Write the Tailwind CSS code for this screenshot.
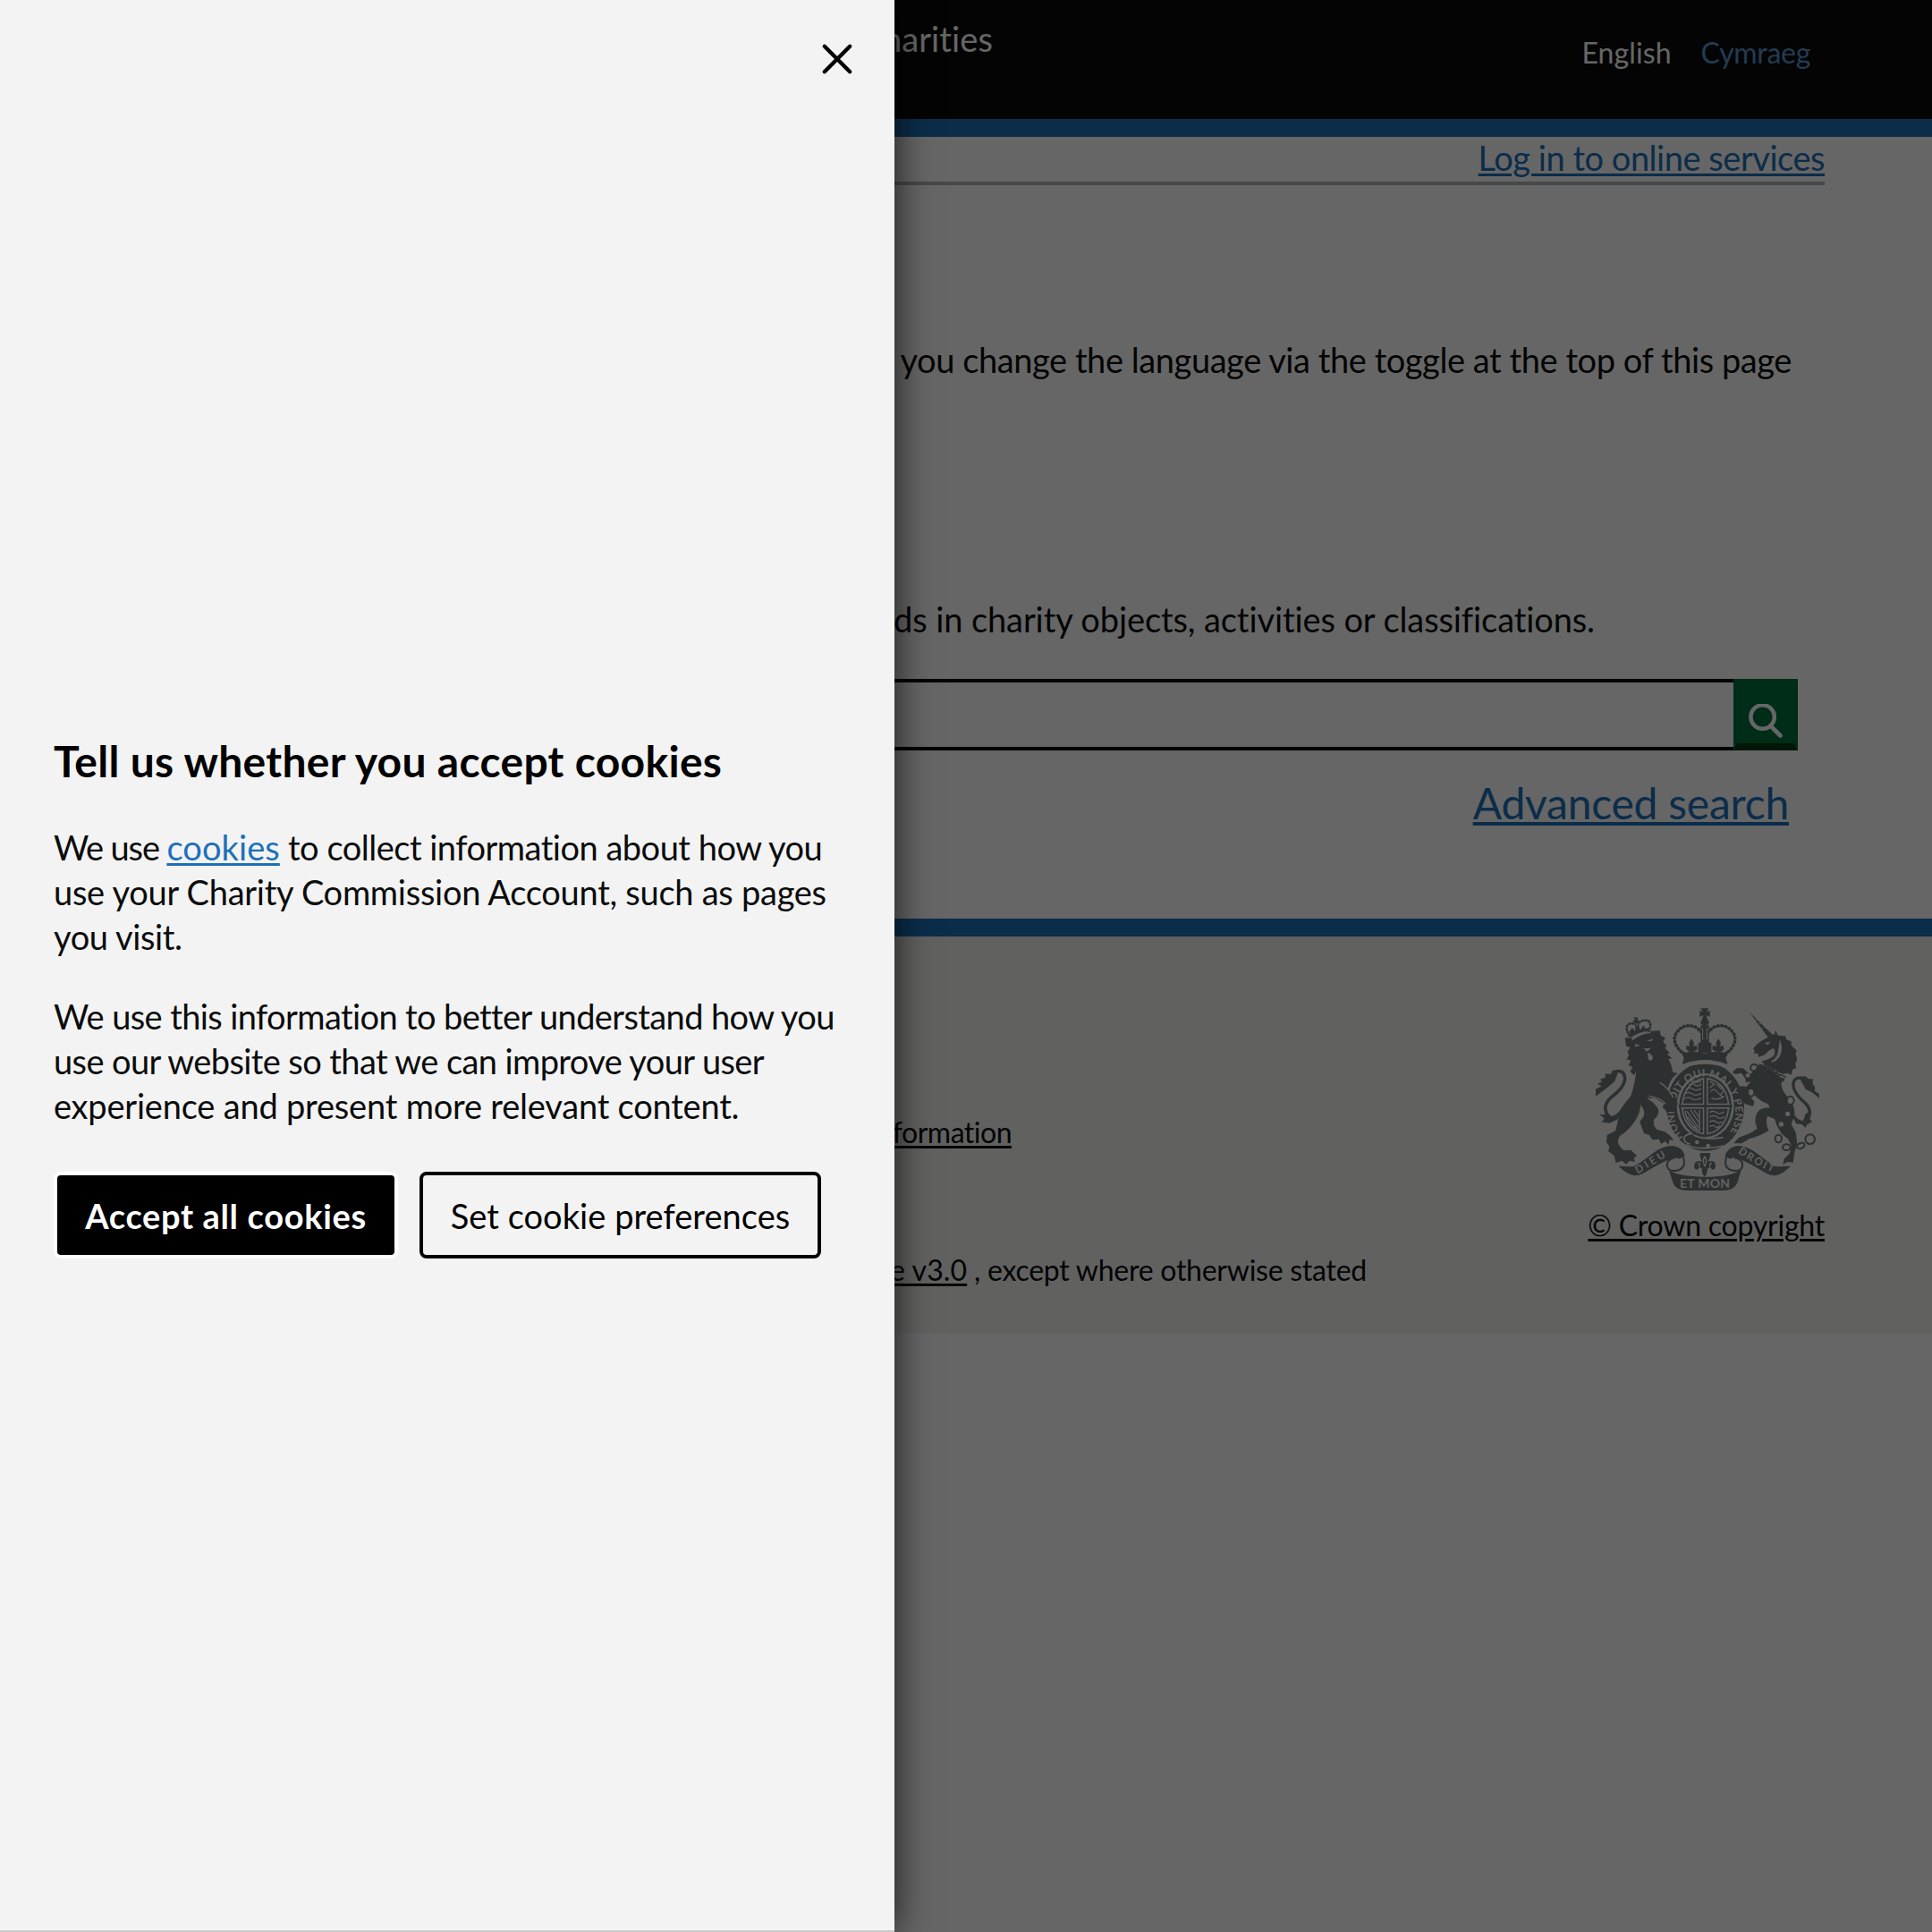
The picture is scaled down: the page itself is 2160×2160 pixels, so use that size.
<!DOCTYPE html>
<html lang="en">
<head>
<meta charset="utf-8">
<title>Register of charities</title>
<script src="https://cdn.jsdelivr.net/npm/@tailwindcss/browser@4"></script>
</head>
<body class="bg-white font-['Lato','Noto_Sans',sans-serif] text-[#0b0c0c]">
<div class="relative h-[2160px] w-[2160px] overflow-hidden">

  <!-- Page -->
  <header class="flex h-[153px] items-start justify-between border-b-[20px] border-[#1d70b8] bg-[#0b0c0c] pr-[136px] text-white">
    <div class="mt-[23px] w-[1110px] text-right text-[38px] leading-[40px] tracking-[0.1px]">Register of charities</div>
    <nav class="mt-[39px] flex gap-[33px] text-[32px] leading-[40px]">
      <span class="tracking-[0.1px]">English</span>
      <a class="tracking-[-0.3px] text-[#5694ca]">Cymraeg</a>
    </nav>
  </header>

  <main>
    <div class="mx-[120px] h-[54px] border-b-4 border-[#b1b4b6] pt-[3px] text-right text-[38px] leading-[40px]">
      <a class="tracking-[-0.47px] text-[#1d70b8] underline decoration-[3px] underline-offset-[3px]">Log in to online services</a>
    </div>
    <p class="mt-[170px] pr-[157px] text-right text-[38px] leading-[50px] tracking-[-0.43px]">you change the language via the toggle at the top of this page</p>
    <p class="mt-[240px] pr-[377px] text-right text-[38px] leading-[50px] tracking-[-0.1px]">words in charity objects, activities or classifications.</p>
    <div class="ml-[120px] mt-[42px] flex h-[80px] w-[1890px]">
      <div class="flex-1 border-y-4 border-l-4 border-[#0b0c0c]"></div>
      <button class="flex h-[80px] w-[72px] items-start border-x-4 border-b-8 border-t-4 border-b-[#00370f] border-x-[#00703c] border-t-[#00703c] bg-[#00703c]" aria-label="Search">
        <svg class="ml-[12px] mt-[24px]" width="42" height="42" viewBox="0 0 42 42" fill="none" stroke="#fff" stroke-width="4.6" stroke-linecap="round"><circle cx="16.6" cy="14.5" r="13.2"/><path d="M26 25 L36.5 35.5"/></svg>
      </button>
    </div>
    <div class="mt-[29px] pr-[160px] text-right text-[48px] leading-[60px]">
      <a class="tracking-[-0.24px] text-[#1d70b8] underline decoration-[4px] underline-offset-[3px]">Advanced search</a>
    </div>
  </main>

  <footer class="mt-[99px] flex h-[464px] justify-between border-t-[20px] border-[#1d70b8] bg-[#f3f2f1] pr-[120px] text-[32px] leading-[40px]">
    <div class="w-[1528px] pt-[199px]">
      <div class="w-[1131px] text-right"><a class="tracking-[-0.5px] underline decoration-[3px] underline-offset-[3px]">Information</a></div>
      <div class="mt-[114px] text-right tracking-[-0.25px]"><a class="tracking-[0.1px] underline decoration-[3px] underline-offset-[3px]">Licence v3.0</a> , except where otherwise stated</div>
    </div>
    <div class="flex flex-col items-end pt-[80px]">
      <svg class="mr-[6px] block" width="250" height="204" viewBox="72 50 750 612" fill="#6e7878" font-family="Lato, sans-serif" font-weight="700">
        <defs>
          <path id="garter" d="M366 484 A103 119 0 1 1 512 482"/>
          <path id="dieu" d="M213 606 Q262 578 316 544"/>
          <path id="droit" d="M548 535 Q610 578 674 606"/>
        </defs>
        <!-- Garter and shield -->
        <ellipse cx="440" cy="381" rx="130" ry="148"/>
        <ellipse cx="440" cy="379" rx="96" ry="110" fill="#f3f2f1"/>
        <ellipse cx="440" cy="379" rx="88" ry="103"/>
        <ellipse cx="440" cy="379" rx="80" ry="95" fill="#f3f2f1"/>
        <ellipse cx="440" cy="379" rx="75" ry="90"/>
        <g fill="none" stroke="#f3f2f1" stroke-width="4">
          <path d="M385 308 q10 -8 20 0 t22 -4 M376 322 q12 -8 22 0 t28 -2 M370 338 q14 -9 26 0 t30 -2 M368 354 q14 -9 26 0 t32 -2 M390 296 q14 8 36 -2"/>
          <path d="M456 296 l14 10 l-16 12 M478 306 l18 18 M458 330 q12 -14 22 2 t20 -4 M460 352 q20 10 44 -6 M488 340 l12 10"/>
          <path d="M378 396 l38 54 M390 392 l28 42 M402 392 l16 24 M380 414 l32 42 M372 394 q6 50 48 68 M420 392 v70"/>
          <path d="M454 400 q12 -8 22 0 t28 -2 M454 416 q14 -9 26 0 t24 -2 M454 432 q12 -8 22 0 t22 -2 M454 448 q12 -8 20 0 t14 -4"/>
          <path d="M440 284 V474 M358 379 H522" stroke-width="17"/>
        </g>
        <path d="M440 280 V478 M350 379 H530" stroke="#6e7878" stroke-width="8" fill="none"/>
        <text font-size="35" fill="#f3f2f1"><textPath href="#garter" textLength="512">HONI SOIT QUI MAL Y PENSE</textPath></text>
        <path d="M362 474 Q400 462 420 476 Q470 500 510 492 L495 512 Q430 500 380 510 Q366 500 362 474 Z"/>
        <path d="M398 472 Q370 472 368 488 Q370 504 390 506 M400 476 Q440 495 500 484 M375 508 Q420 530 500 512" fill="none" stroke="#f3f2f1" stroke-width="5"/>
        <circle cx="412" cy="500" r="7" fill="#f3f2f1"/><circle cx="449" cy="512" r="7" fill="#f3f2f1"/>
        <!-- Crown -->
        <path d="M358 192 L376 200 L390 194 L438 202 L488 194 L500 200 L518 192 L508 218 L515 238 Q438 216 362 238 L368 218 Z"/>
        <path d="M366 238 Q440 210 510 238 L508 250 Q440 226 368 250 Z" fill="#f3f2f1"/>
        <path d="M424 108 H452 V166 H460 V200 H416 V166 H424 Z"/>
        <path d="M431 116 V156 M445 116 V156" stroke="#f3f2f1" stroke-width="3"/>
        <g fill="none" stroke="#6e7878" stroke-linecap="round">
          <path d="M368 205 Q326 170 340 138 Q362 100 402 112 Q418 118 424 132" stroke-width="5"/>
          <path d="M508 205 Q550 170 536 138 Q514 100 474 112 Q458 118 452 132" stroke-width="5"/>
          <path d="M368 205 Q326 170 340 138 Q362 100 402 112 Q418 118 424 132" stroke-width="12" stroke-dasharray="0 13"/>
          <path d="M508 205 Q550 170 536 138 Q514 100 474 112 Q458 118 452 132" stroke-width="12" stroke-dasharray="0 13"/>
        </g>
        <path d="M393 152 L402 168 L399 178 L412 176 L412 190 L400 196 L386 196 L376 188 L376 176 L388 178 L385 168 Z M483 152 L492 168 L489 178 L500 176 L502 190 L490 196 L476 196 L464 190 L464 176 L478 178 L475 168 Z"/>
        <path d="M424 51 H451 L444 64 L455 58 V80 L443 74 L448 90 H428 L433 74 L421 80 V58 L432 64 Z"/>
        <ellipse cx="438" cy="98" rx="14" ry="10"/>
        <!-- Lion -->
        <path d="M170 150 L200 150 L242 128 L288 126 L290 142 L306 150 L298 162 L310 178 L304 184 L320 200 L312 206 L328 218 L316 222 Q328 240 330 266 L347 268 Q332 280 326 290 Q318 304 314 320 L324 340 L343 352 L347 374 L336 384 L332 400 L322 394 L312 404 L306 392 L296 384 L302 370 L270 352 L242 352 Q270 366 282 390 Q286 408 268 424 Q262 442 278 458 L302 464 L322 478 L334 494 L318 492 L318 508 L304 497 L292 506 L284 490 L262 492 L252 476 L234 470 L226 450 L220 430 L232 415 Q238 400 230 385 L222 374 Q222 402 202 432 Q182 462 152 480 L146 497 Q150 516 168 528 L190 526 L210 545 L200 554 L204 566 L186 562 L174 574 L160 562 L140 570 L134 545 L114 530 L118 514 L108 500 L110 476 L138 462 L144 440 Q150 400 166 374 L190 345 Q202 310 208 262 L200 276 L188 262 L196 248 L182 242 L190 226 L176 222 L184 206 L178 198 L188 182 L174 178 Z"/>
        <path d="M204 170 l18 6 l-18 4 Z M244 160 l20 -8 l-4 10 Z M232 186 l12 10 l14 -12 M246 200 q16 4 18 18 q-6 14 -16 4 Z M192 152 Q226 128 256 128 L256 134 Q226 136 196 158 Z" fill="#f3f2f1"/>
        <path d="M184 142 Q172 118 178 108 Q190 96 206 106 L208 130 M250 126 Q262 104 248 92 Q228 88 216 100 L214 130" fill="none" stroke="#6e7878" stroke-width="4"/>
        <path d="M184 142 Q172 118 178 108 Q190 96 206 106 M250 126 Q262 104 248 92 Q228 88 216 100" fill="none" stroke="#6e7878" stroke-width="9" stroke-linecap="round" stroke-dasharray="0 11"/>
        <path d="M184 130 L194 116 L204 128 L212 104 L222 124 L232 108 L240 120 L250 116 L250 126 Q212 132 190 150 Z M200 80 L214 82 L212 90 L218 94 L210 104 L202 100 L196 92 L204 90 Z"/>
        <path d="M288 300 Q320 322 332 350 M250 345 Q290 350 306 372" fill="none" stroke="#f3f2f1" stroke-width="4"/>
        <path d="M128 266 Q170 250 170 290 Q166 318 126 348 Q92 376 112 410 M100 420 Q140 428 166 385" fill="none" stroke="#6e7878" stroke-width="11"/>
        <path d="M72 346 L72 322 L92 312 L78 304 L92 298 L88 288 L104 284 L104 270 L120 272 L134 260 L146 268 L136 296 L112 316 Z M84 406 L102 408 L104 394 L126 414 L160 400 L144 424 L118 436 L90 432 L104 422 Z"/>
        <!-- Unicorn -->
        <path d="M588 64 L662 136 L672 140 L674 124 L684 142 L708 144 L712 156 L728 162 L728 176 L746 192 L742 204 L748 222 L742 236 L744 252 L732 256 L728 274 L714 268 L700 272 L680 262 L640 240 L628 230 L650 222 L668 212 Q678 195 668 184 Q650 192 640 206 L618 214 L616 202 L601 202 L606 194 L600 186 L612 172 L628 160 L650 148 Z"/>
        <path d="M606 88 l8 2 M618 102 l8 0 M630 116 l8 0 M640 168 l16 -4 l-6 8 Z M690 160 q12 30 -4 56 q-12 16 -26 14 q22 -14 24 -30 Z" fill="#f3f2f1" stroke="#f3f2f1" stroke-width="2"/>
        <path d="M622 236 L640 246 L690 282 L708 286 L694 302 Q696 330 720 352 Q744 385 738 412 L728 440 L744 470 L748 510 L740 530 L734 568 L716 566 L700 574 L704 556 L722 538 L728 512 L718 490 L696 472 L680 445 L672 422 L648 412 Q640 435 652 462 Q622 480 588 488 L562 504 L534 504 L552 484 L590 470 L614 454 Q600 425 614 400 Q626 384 656 384 L650 372 Q622 362 596 334 L588 344 L604 364 L600 380 L574 372 L558 358 L548 330 L558 312 L578 314 L592 296 L576 300 L574 286 L560 268 L540 272 L530 266 L545 252 L566 252 L590 272 L606 258 Z"/>
        <path d="M632 228 Q664 266 712 282 M626 240 Q660 278 704 296" fill="none" stroke="#6e7878" stroke-width="4"/>
        <path d="M636 238 l6 12 l10 -4 l2 14 l12 -4 l2 14 l12 -4 l4 12 l12 -4" fill="none" stroke="#6e7878" stroke-width="5"/>
        <g fill="none" stroke="#6e7878" stroke-width="6">
          <ellipse cx="603" cy="250" rx="12" ry="11"/><ellipse cx="593" cy="333" rx="11" ry="13" fill="#f3f2f1"/><ellipse cx="725" cy="360" rx="12" ry="14" fill="#f3f2f1"/>
          <ellipse cx="685" cy="488" rx="11" ry="13"/><ellipse cx="712" cy="517" rx="13" ry="10"/><ellipse cx="760" cy="512" rx="13" ry="9" transform="rotate(-25 760 512)"/><circle cx="791" cy="490" r="16"/>
        </g>
        <g fill="#f3f2f1"><circle cx="716" cy="405" r="8"/><circle cx="694" cy="440" r="8"/><circle cx="582" cy="276" r="7"/></g>
        <path d="M772 286 Q728 276 736 318 Q744 344 774 368 Q800 392 784 424 M728 400 Q746 440 786 436" fill="none" stroke="#6e7878" stroke-width="10"/>
        <path d="M756 284 L774 278 L786 288 L800 288 L800 304 L808 316 L806 328 L822 338 L822 352 L796 332 L776 322 L764 300 Z M776 404 L794 398 L788 420 L798 432 L780 440 L776 452 L764 440 L744 438 L738 424 L768 428 Z"/>
        <!-- Motto ribbons -->
        <path d="M148 580 L196 582 Q214 576 262 538 Q296 512 330 512 Q368 518 370 548 L350 556 Q336 544 322 556 Q284 572 236 602 Q214 614 198 611 Q176 606 148 580 Z"/>
        <path d="M726 580 L680 582 Q662 576 614 538 Q580 512 546 512 Q512 518 506 548 L524 556 Q540 544 554 556 Q592 572 640 602 Q662 614 678 611 Q700 606 726 580 Z"/>
        <path d="M340 552 Q308 556 312 582 Q318 602 350 594 Q376 584 366 550 M536 552 Q568 556 564 582 Q558 602 526 594 Q500 584 510 550" fill="none" stroke="#6e7878" stroke-width="6"/>
        <path d="M318 594 Q350 616 438 616 Q526 616 560 592 L548 634 Q536 662 500 662 H376 Q340 660 332 638 Z"/>
        <g fill="#f3f2f1" font-size="35">
          <text><textPath href="#dieu" textLength="112">DIEU</textPath></text>
          <text><textPath href="#droit" textLength="134">DROIT</textPath></text>
          <text x="354" y="654" font-size="42" textLength="168">ET MON</text>
        </g>
        <path d="M422 536 H456 V548 Q452 556 450 566 Q474 556 474 582 Q468 602 456 584 L448 588 L444 606 L438 616 L430 606 L428 588 L420 584 Q408 602 402 582 Q404 556 428 566 Q426 556 422 548 Z"/>
        <path d="M438 548 Q428 562 438 580 Q448 562 438 548 M414 570 q8 0 6 12 M462 570 q-8 0 -6 12" fill="none" stroke="#f3f2f1" stroke-width="4"/>
      </svg>
      <a class="mt-[19px] tracking-[-0.22px] underline decoration-[3px] underline-offset-[3px]">© Crown copyright</a>
    </div>
  </footer>

  <!-- Dimmed backdrop with cookie panel -->
  <div class="absolute inset-0 bg-black/60">
    <aside class="relative flex h-[2160px] w-[1000px] flex-col border-b-2 border-[#ccc] bg-[#f3f3f3] px-[60px] shadow-[0_0_40px_rgba(0,0,0,0.75)]">
      <button class="absolute right-[46px] top-[48px]" aria-label="Close">
        <svg width="36" height="36" viewBox="0 0 36 36" fill="none" stroke="#000" stroke-width="4.4" stroke-linecap="round"><path d="M3.8 3.8 L32.2 32.2 M32.2 3.8 L3.8 32.2"/></svg>
      </button>
      <h2 class="mt-[821px] text-[48px] font-bold leading-[60px] tracking-[0.3px] text-black">Tell us whether you accept cookies</h2>
      <p class="mt-[41px] whitespace-nowrap text-[38px] leading-[50px]"><span class="tracking-[-1.15px]">We use </span><a class="tracking-[0.09px] text-[#1d70b8] underline decoration-[3px] underline-offset-[3px]">cookies</a><span class="tracking-[-0.5px]"> to collect information about how you</span><br>
        <span class="tracking-[-0.27px]">use your Charity Commission Account, such as pages</span><br>
        <span class="tracking-[-0.4px]">you visit.</span></p>
      <p class="mt-[39px] whitespace-nowrap text-[38px] leading-[50px]"><span class="tracking-[-0.61px]">We use this information to better understand how you</span><br>
        <span class="tracking-[-0.6px]">use our website so that we can improve your user</span><br>
        <span class="tracking-[-0.2px]">experience and present more relevant content.</span></p>
      <div class="mt-[49px] flex gap-[24px] whitespace-nowrap text-[38px] leading-[50px] text-black">
        <button class="h-[97px] w-[385px] rounded-lg border-4 border-white bg-black font-bold tracking-[0.65px] text-white">Accept all cookies</button>
        <button class="h-[97px] w-[449px] rounded-lg border-4 border-black tracking-[0.05px]">Set cookie preferences</button>
      </div>
    </aside>
  </div>
</div>
</body>
</html>
